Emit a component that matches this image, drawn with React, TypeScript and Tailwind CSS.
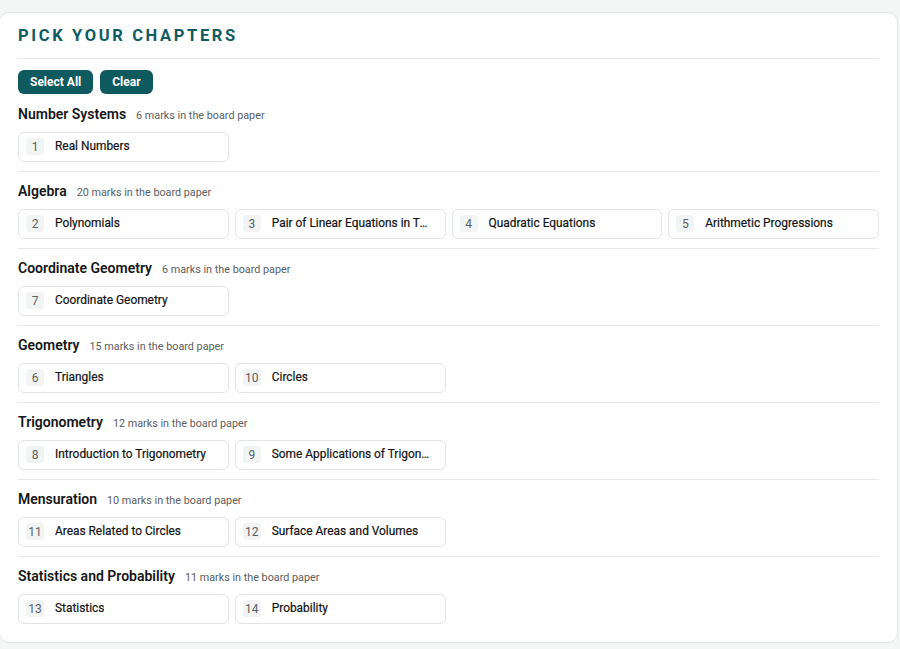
const sections = [
  { name: "Number Systems", marks: 6, chapters: [[1, "Real Numbers"]] },
  {
    name: "Algebra",
    marks: 20,
    chapters: [
      [2, "Polynomials"],
      [3, "Pair of Linear Equations in Two Variables"],
      [4, "Quadratic Equations"],
      [5, "Arithmetic Progressions"],
    ],
  },
  { name: "Coordinate Geometry", marks: 6, chapters: [[7, "Coordinate Geometry"]] },
  { name: "Geometry", marks: 15, chapters: [[6, "Triangles"], [10, "Circles"]] },
  {
    name: "Trigonometry",
    marks: 12,
    chapters: [
      [8, "Introduction to Trigonometry"],
      [9, "Some Applications of Trigonometry"],
    ],
  },
  {
    name: "Mensuration",
    marks: 10,
    chapters: [
      [11, "Areas Related to Circles"],
      [12, "Surface Areas and Volumes"],
    ],
  },
  {
    name: "Statistics and Probability",
    marks: 11,
    chapters: [
      [13, "Statistics"],
      [14, "Probability"],
    ],
  },
] as const;

function ChapterChip({ num, title }: { num: number; title: string }) {
  return (
    <button className="flex h-[30px] min-w-0 items-center gap-[11px] rounded-md border border-[#e1e5e5] bg-white pl-[7px] pr-3 pb-px text-left">
      <span className="flex h-[17px] w-[18px] shrink-0 items-center justify-center rounded-[3px] bg-[#f2f4f4] text-[12px] text-[#5a5f60]">
        {num}
      </span>
      <span className="min-w-0 truncate text-[11.9px] text-[#111314] [-webkit-text-stroke:0.2px_#111314]">
        {title}
      </span>
    </button>
  );
}

export default function App() {
  return (
    <div
      className="min-h-screen bg-[#f4f6f6] pt-3"
      style={{ fontFamily: "Roboto, 'Liberation Sans', sans-serif" }}
    >
      <div className="w-[899px] -ml-px rounded-[10px] border border-[#e0e5e4] bg-white px-[18px] pt-[13px] pb-[18px]">
        <h1 className="text-[16.5px] font-bold leading-5 tracking-[0.16em] text-[#0f5c60]">
          PICK YOUR CHAPTERS
        </h1>
        <div className="mt-3 border-t border-[#e6eaea]" />
        <div className="mt-[11px] flex gap-[7px]">
          <button className="h-6 rounded-md bg-[#0f5a5e] px-3 text-[12px] font-bold text-white">
            Select All
          </button>
          <button className="h-6 rounded-md bg-[#0f5a5e] px-3 text-[12px] font-bold text-white">
            Clear
          </button>
        </div>
        <div className="mt-[10px]">
          {sections.map((s, i) => (
            <div key={s.name}>
              {i > 0 && <div className="my-[9px] border-t border-[#e6eaea]" />}
              <div className="flex items-baseline gap-[10px] leading-5">
                <span className="text-[14px] font-semibold text-[#151718]">{s.name}</span>
                <span className="text-[10.8px] text-[#5b6061]">{s.marks} marks in the board paper</span>
              </div>
              <div className="mt-[6px] grid grid-cols-4 gap-[6px]">
                {s.chapters.map(([n, t]) => (
                  <ChapterChip key={n} num={n} title={t} />
                ))}
              </div>
            </div>
          ))}
        </div>
      </div>
    </div>
  );
}
